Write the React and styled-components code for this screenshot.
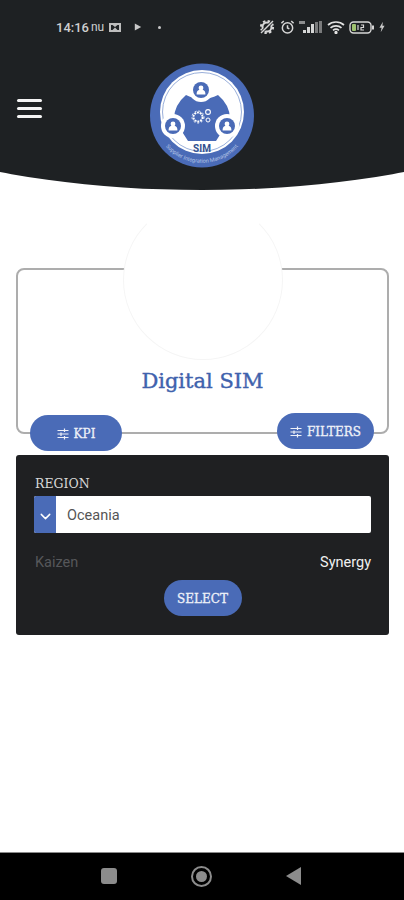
import React from 'react'
import styled, { createGlobalStyle } from 'styled-components'
import { FiChevronDown } from 'react-icons/fi'

const GlobalStyle = createGlobalStyle`
    html, body { margin: 0; padding: 0; background: #fff; }
    * { box-sizing: border-box; }
    body { font-family: Roboto, "Liberation Sans", sans-serif; }
`;

const Page = styled.div`
    width: 404px;
    height: 900px;
    display: flex;
    flex-direction: column;
    overflow: hidden;
`;

const Header = styled.header`
    height: 190px;
    flex: none;
    background: #1e2123;
    clip-path: ellipse(404px 134px at 50% 56px);
    padding: 16px 0 0;
`;

const StatusBar = styled.div`
    height: 22px;
    padding: 0 19px 0 56px;
    display: flex;
    align-items: center;
    justify-content: space-between;
    color: #cfd0d0;
`;

const StatusLeft = styled.div`
    display: flex;
    align-items: center;
    gap: 4px;
`;

const Clock = styled.span`
    font-size: 13px;
    font-weight: 500;
`;

const ClockSuffix = styled.span`
    font-size: 12px;
    margin-left: -2px;
`;

const StatusRight = styled.div`
    display: flex;
    align-items: center;
    gap: 4px;
`;

const NavRow = styled.div`
    display: grid;
    grid-template-columns: 133px 104px;
    align-items: start;
    margin-top: 25px;
    padding-left: 17px;
`;

const Burger = styled.div`
    width: 25px;
    margin-top: 36px;
    display: flex;
    flex-direction: column;
    gap: 5px;
    span {
        display: block;
        height: 3px;
        border-radius: 2px;
        background: #f4f4f4;
    }
`;

const LogoWrap = styled.div`
    width: 104px;
    height: 105px;
`;

const Main = styled.main`
    flex: 1;
    padding: 78px 15px 0 16px;
`;

const Card = styled.section`
    height: 166px;
    border: 2px solid #adadad;
    border-radius: 8px;
    display: flex;
    flex-direction: column;
    align-items: center;
`;

const Avatar = styled.div`
    width: 160px;
    height: 160px;
    flex: none;
    margin-top: -70px;
    border-radius: 50%;
    background: #fff;
    border: 1px solid #f5f5f5;
    border-top-color: #fff;
`;

const Title = styled.h1`
    margin: 9px 0 0;
    font-family: "DejaVu Serif", "Liberation Serif", serif;
    font-size: 21px;
    font-weight: 400;
    -webkit-text-stroke: 0.4px #3f62ad;
    color: #3f62ad;
    white-space: nowrap;
`;

const ActionRow = styled.div`
    display: flex;
    justify-content: space-between;
    align-items: flex-start;
    margin-top: -21px;
    padding: 0 15px 0 14px;
    position: relative;
`;

const Pill = styled.button`
    height: 36px;
    width: ${(p) => p.$width}px;
    margin-top: ${(p) => p.$top || 0}px;
    border: 0;
    border-radius: 18px;
    background: #4a6bb7;
    color: #eef1f8;
    display: flex;
    align-items: center;
    justify-content: center;
    gap: 5px;
    font-family: "DejaVu Serif", "Liberation Serif", serif;
    font-size: 12px;
    font-weight: 400;
    -webkit-text-stroke: 0.3px #eef1f8;
    padding: 2px 0 0;
`;

const Panel = styled.section`
    height: 180px;
    margin-top: 4px;
    padding: 21px 18px 0;
    background: #1f2022;
    border-radius: 3px;
`;

const FieldLabel = styled.div`
    margin-left: 1px;
    font-family: "DejaVu Serif", "Liberation Serif", serif;
    font-size: 12.5px;
    line-height: 16px;
    color: #d8d8d8;
`;

const Select = styled.div`
    height: 37px;
    margin-top: 4px;
    background: #fff;
    border-radius: 2px;
    display: flex;
    align-items: stretch;
    overflow: hidden;
`;

const SelectArrow = styled.div`
    width: 22px;
    padding-top: 3px;
    background: #4a6bb7;
    color: #fff;
    display: flex;
    align-items: center;
    justify-content: center;
    font-size: 17px;
`;

const SelectValue = styled.div`
    flex: 1;
    padding: 2px 0 0 11px;
    display: flex;
    align-items: center;
    font-size: 14.5px;
    color: #555;
`;

const OptionRow = styled.div`
    display: flex;
    justify-content: space-between;
    margin-top: 22px;
    padding-left: 1px;
    font-size: 14.5px;
    line-height: 16px;
`;

const Option = styled.span`
    color: ${(p) => (p.$active ? '#f0f0f0' : '#56575a')};
`;

const SelectRow = styled.div`
    display: flex;
    justify-content: center;
    margin-top: 9px;
`;

const SystemNav = styled.nav`
    height: 48px;
    flex: none;
    background: #000;
    border-top: 1px solid #8a8a8a;
    display: grid;
    grid-template-columns: 101px 16px 74px 22px 73px 16px;
    align-items: center;
    padding-bottom: 1px;
`;

const NavSquare = styled.div`
    grid-column: 2;
    width: 16px;
    height: 16px;
    border-radius: 3px;
    background: #8c8c8c;
`;

const NavCircle = styled.div`
    grid-column: 4;
    width: 21px;
    height: 21px;
    border-radius: 50%;
    border: 2px solid #8c8c8c;
    display: flex;
    align-items: center;
    justify-content: center;
    &::after {
        content: '';
        width: 11px;
        height: 11px;
        border-radius: 50%;
        background: #8c8c8c;
    }
`;

const NavBack = styled.div`
    grid-column: 6;
    width: 15px;
    height: 18px;
    background: #8c8c8c;
    clip-path: polygon(100% 0, 100% 100%, 0 50%);
`;

function SlidersIcon() {
    return (
        <svg width="12" height="12" viewBox="0 0 12 12" fill="none" stroke="currentColor" strokeWidth="1.2">
            <path d="M0.5 2.5H11.5M0.5 6H11.5M0.5 9.5H11.5" />
            <path d="M7.5 0.5V4M4 4.500V8M7.500 8V11.500" />
        </svg>
    );
}

function PersonBadge({ cx, cy, r }) {
    return (
        <g>
            <circle cx={cx} cy={cy} r={r + 4} fill="#fff" />
            <circle cx={cx} cy={cy} r={r} fill="#4a6bb7" />
            <circle cx={cx} cy={cy - 2} r={r * 0.3} fill="#fff" />
            <path d={`M${cx - r * 0.55} ${cy + r * 0.55}c0-${r * 0.5} ${r * 0.3}-${r * 0.6} ${r * 0.55}-${r * 0.6}s${r * 0.55} ${r * 0.1} ${r * 0.55} ${r * 0.6}z`} fill="#fff" />
        </g>
    );
}

function Logo() {
    return (
        <svg width="104" height="105" viewBox="0 0 104 105">
            <defs>
                <path id="ringText" d="M4.700 60A48 48 0 0 0 99.300 60" />
            </defs>
            <circle cx="52" cy="52.500" r="52" fill="#4a6bb7" />
            <circle cx="52" cy="49" r="42" fill="#fff" />
            <circle cx="52" cy="49" r="39.500" fill="none" stroke="#7f9ad0" strokeWidth="0.8" />
            <path d="M36 32Q52 40 68 32Q80 42 80 56L66 78H38L24 56Q24 42 36 32Z" fill="#4a6bb7" />
            <PersonBadge cx={51} cy={27} r={8} />
            <PersonBadge cx={23} cy={63} r={8} />
            <PersonBadge cx={77} cy={63} r={8} />
            <circle cx="48" cy="54" r="4.500" fill="none" stroke="#fff" strokeWidth="1.800" strokeDasharray="2 0.800" />
            <circle cx="48" cy="54" r="6" fill="none" stroke="#fff" strokeWidth="1" strokeDasharray="2 2" />
            <circle cx="58" cy="49" r="2.400" fill="none" stroke="#fff" strokeWidth="1.100" />
            <circle cx="58" cy="57" r="2" fill="none" stroke="#fff" strokeWidth="1" />
            <text x="52" y="89" textAnchor="middle" fontFamily="Roboto, sans-serif" fontSize="10" fontWeight="700" fill="#34518f">SIM</text>
            <text fontFamily="Roboto, sans-serif" fontSize="5.500" fill="#b6c5e6">
                <textPath href="#ringText" startOffset="50%" textAnchor="middle">Supplier Integration Management</textPath>
            </text>
        </svg>
    );
}

function StatusIcons() {
    return (
        <StatusRight>
            <svg width="18" height="16" viewBox="0 0 18 16" fill="none" stroke="#d6d6d6">
                <circle cx="9" cy="8" r="4.500" strokeWidth="2" />
                <circle cx="9" cy="8" r="6" strokeWidth="2.200" strokeDasharray="2.400 2.300" />
                <path d="M3 14L15 2" stroke="#1e2123" strokeWidth="3" />
                <path d="M3 14L15 2" strokeWidth="1.400" />
            </svg>
            <svg width="15" height="16" viewBox="0 0 16 16" fill="none" stroke="#d6d6d6" strokeWidth="1.600">
                <circle cx="8" cy="9" r="5.500" />
                <path d="M8 6v3l2 1M1.500 4L4 1.500M14.500 4L12 1.500" />
            </svg>
            <svg width="24" height="14" viewBox="0 0 24 14" fill="#d6d6d6">
                <rect x="0" y="1" width="6" height="3" opacity=".6" />
                <rect x="4" y="10" width="3" height="3" />
                <rect x="8" y="7" width="3" height="6" />
                <rect x="12" y="4" width="3" height="9" />
                <rect x="16" y="2" width="3" height="11" opacity=".5" />
                <rect x="20" y="1" width="3" height="12" opacity=".5" />
            </svg>
            <svg width="18" height="14" viewBox="0 0 18 14" fill="none" stroke="#e2e2e2" strokeWidth="1.700">
                <path d="M1 5c4.500-4 11.500-4 16 0M3.500 7.800c3-2.600 8-2.600 11 0M6 10.300c1.800-1.400 4.200-1.400 6 0" />
                <circle cx="9" cy="12.500" r=".8" fill="#e2e2e2" />
            </svg>
            <svg width="26" height="13" viewBox="0 0 26 13" fill="none">
                <rect x="1" y="1" width="21" height="11" rx="3.500" stroke="#d6d6d6" strokeWidth="1.400" />
                <rect x="3" y="3" width="4" height="7" rx="1" fill="#9fc26f" />
                <path d="M9 4v5M12 4h2.500v2.500H12V9h3" stroke="#d6d6d6" strokeWidth="1.200" />
                <rect x="23" y="4.500" width="2" height="4" fill="#d6d6d6" />
            </svg>
            <svg width="6" height="12" viewBox="0 0 7 12" fill="#c8c8c8">
                <path d="M4.500 0L0.500 7H3L2 12l4.500-7.500H4z" />
            </svg>
        </StatusRight>
    );
}

function App() {
    return (
        <>
            <GlobalStyle />
            <Page>
                <Header>
                    <StatusBar>
                        <StatusLeft>
                            <Clock>14:16</Clock>
                            <ClockSuffix>nu</ClockSuffix>
                            <svg width="14" height="11" viewBox="0 0 14 11" fill="#bdbdbd">
                                <path d="M1 1h12v9H1zM3 3v5h1.500L7 5.500 9.500 8H11V3H9.500L7 5 4.500 3z" fillRule="evenodd" />
                            </svg>
                            <svg width="8" height="8" viewBox="0 0 10 9" fill="#c8c8c8" style={{ marginLeft: 8 }}>
                                <path d="M1 0l8 4.500L1 9z" />
                            </svg>
                            <svg width="3" height="3" viewBox="0 0 3 3" fill="#c8c8c8" style={{ marginLeft: 12 }}>
                                <circle cx="1.500" cy="1.500" r="1.500" />
                            </svg>
                        </StatusLeft>
                        <StatusIcons />
                    </StatusBar>
                    <NavRow>
                        <Burger><span /><span /><span /></Burger>
                        <LogoWrap><Logo /></LogoWrap>
                    </NavRow>
                </Header>
                <Main>
                    <Card>
                        <Avatar />
                        <Title>Digital SIM</Title>
                    </Card>
                    <ActionRow>
                        <Pill $width={92} $top={2}><SlidersIcon />KPI</Pill>
                        <Pill $width={97}><SlidersIcon />FILTERS</Pill>
                    </ActionRow>
                    <Panel>
                        <FieldLabel>REGION</FieldLabel>
                        <Select>
                            <SelectArrow><FiChevronDown /></SelectArrow>
                            <SelectValue>Oceania</SelectValue>
                        </Select>
                        <OptionRow>
                            <Option>Kaizen</Option>
                            <Option $active>Synergy</Option>
                        </OptionRow>
                        <SelectRow>
                            <Pill $width={78}>SELECT</Pill>
                        </SelectRow>
                    </Panel>
                </Main>
                <SystemNav>
                    <NavSquare />
                    <NavCircle />
                    <NavBack />
                </SystemNav>
            </Page>
        </>
    )
}

export default App
